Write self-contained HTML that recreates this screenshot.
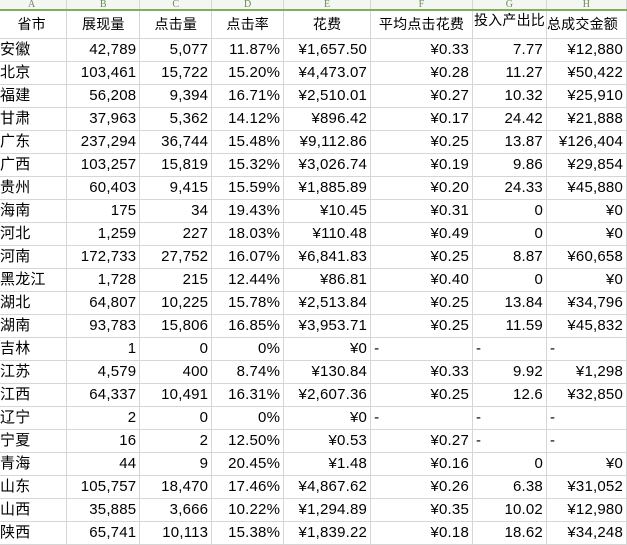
<!DOCTYPE html>
<html><head><meta charset="utf-8"><style>
body{margin:0;width:627px;height:535px;overflow:hidden;background:#fff;font-family:"Liberation Sans","Noto Sans CJK SC",sans-serif;}
table{border-collapse:collapse;table-layout:fixed;position:absolute;left:0;top:0;}
td{border:1px solid #d6d6d6;padding:0 3px;font-size:15px;color:#000;text-align:right;white-space:nowrap;overflow:hidden;height:22px;line-height:22px;letter-spacing:0.2px;}
td:first-child{text-align:left;padding-left:0;border-left:none;}
tr.l td{height:9px;line-height:9px;font-size:10px;color:#6a8a5a;text-align:center;font-family:"Liberation Serif",serif;border-top:none;border-bottom:2px solid #7fae5c;background:#f4f6f2;}
tr.h td{height:27px;line-height:27px;text-align:center;font-size:14px;}
</style></head><body>
<table>
<colgroup><col style="width:67px"><col style="width:73px"><col style="width:72px"><col style="width:72px"><col style="width:87px"><col style="width:102px"><col style="width:74px"><col style="width:80px"></colgroup>
<tr class="l"><td>A</td><td>B</td><td>C</td><td>D</td><td>E</td><td>F</td><td>G</td><td>H</td></tr>
<tr class="h"><td style="text-align:center">省市</td><td>展现量</td><td>点击量</td><td>点击率</td><td>花费</td><td>平均点击花费</td><td style="padding:0;line-height:18px;vertical-align:top">投入产出比</td><td style="padding:0;text-align:left">总成交金额</td></tr>
<tr><td>安徽</td><td>42,789</td><td>5,077</td><td>11.87%</td><td>¥1,657.50</td><td>¥0.33</td><td>7.77</td><td>¥12,880</td></tr>
<tr><td>北京</td><td>103,461</td><td>15,722</td><td>15.20%</td><td>¥4,473.07</td><td>¥0.28</td><td>11.27</td><td>¥50,422</td></tr>
<tr><td>福建</td><td>56,208</td><td>9,394</td><td>16.71%</td><td>¥2,510.01</td><td>¥0.27</td><td>10.32</td><td>¥25,910</td></tr>
<tr><td>甘肃</td><td>37,963</td><td>5,362</td><td>14.12%</td><td>¥896.42</td><td>¥0.17</td><td>24.42</td><td>¥21,888</td></tr>
<tr><td>广东</td><td>237,294</td><td>36,744</td><td>15.48%</td><td>¥9,112.86</td><td>¥0.25</td><td>13.87</td><td>¥126,404</td></tr>
<tr><td>广西</td><td>103,257</td><td>15,819</td><td>15.32%</td><td>¥3,026.74</td><td>¥0.19</td><td>9.86</td><td>¥29,854</td></tr>
<tr><td>贵州</td><td>60,403</td><td>9,415</td><td>15.59%</td><td>¥1,885.89</td><td>¥0.20</td><td>24.33</td><td>¥45,880</td></tr>
<tr><td>海南</td><td>175</td><td>34</td><td>19.43%</td><td>¥10.45</td><td>¥0.31</td><td>0</td><td>¥0</td></tr>
<tr><td>河北</td><td>1,259</td><td>227</td><td>18.03%</td><td>¥110.48</td><td>¥0.49</td><td>0</td><td>¥0</td></tr>
<tr><td>河南</td><td>172,733</td><td>27,752</td><td>16.07%</td><td>¥6,841.83</td><td>¥0.25</td><td>8.87</td><td>¥60,658</td></tr>
<tr><td>黑龙江</td><td>1,728</td><td>215</td><td>12.44%</td><td>¥86.81</td><td>¥0.40</td><td>0</td><td>¥0</td></tr>
<tr><td>湖北</td><td>64,807</td><td>10,225</td><td>15.78%</td><td>¥2,513.84</td><td>¥0.25</td><td>13.84</td><td>¥34,796</td></tr>
<tr><td>湖南</td><td>93,783</td><td>15,806</td><td>16.85%</td><td>¥3,953.71</td><td>¥0.25</td><td>11.59</td><td>¥45,832</td></tr>
<tr><td>吉林</td><td>1</td><td>0</td><td>0%</td><td>¥0</td><td style="text-align:left">-</td><td style="text-align:left">-</td><td style="text-align:left">-</td></tr>
<tr><td>江苏</td><td>4,579</td><td>400</td><td>8.74%</td><td>¥130.84</td><td>¥0.33</td><td>9.92</td><td>¥1,298</td></tr>
<tr><td>江西</td><td>64,337</td><td>10,491</td><td>16.31%</td><td>¥2,607.36</td><td>¥0.25</td><td>12.6</td><td>¥32,850</td></tr>
<tr><td>辽宁</td><td>2</td><td>0</td><td>0%</td><td>¥0</td><td style="text-align:left">-</td><td style="text-align:left">-</td><td style="text-align:left">-</td></tr>
<tr><td>宁夏</td><td>16</td><td>2</td><td>12.50%</td><td>¥0.53</td><td>¥0.27</td><td style="text-align:left">-</td><td style="text-align:left">-</td></tr>
<tr><td>青海</td><td>44</td><td>9</td><td>20.45%</td><td>¥1.48</td><td>¥0.16</td><td>0</td><td>¥0</td></tr>
<tr><td>山东</td><td>105,757</td><td>18,470</td><td>17.46%</td><td>¥4,867.62</td><td>¥0.26</td><td>6.38</td><td>¥31,052</td></tr>
<tr><td>山西</td><td>35,885</td><td>3,666</td><td>10.22%</td><td>¥1,294.89</td><td>¥0.35</td><td>10.02</td><td>¥12,980</td></tr>
<tr><td>陕西</td><td>65,741</td><td>10,113</td><td>15.38%</td><td>¥1,839.22</td><td>¥0.18</td><td>18.62</td><td>¥34,248</td></tr>
</table>
</body></html>
